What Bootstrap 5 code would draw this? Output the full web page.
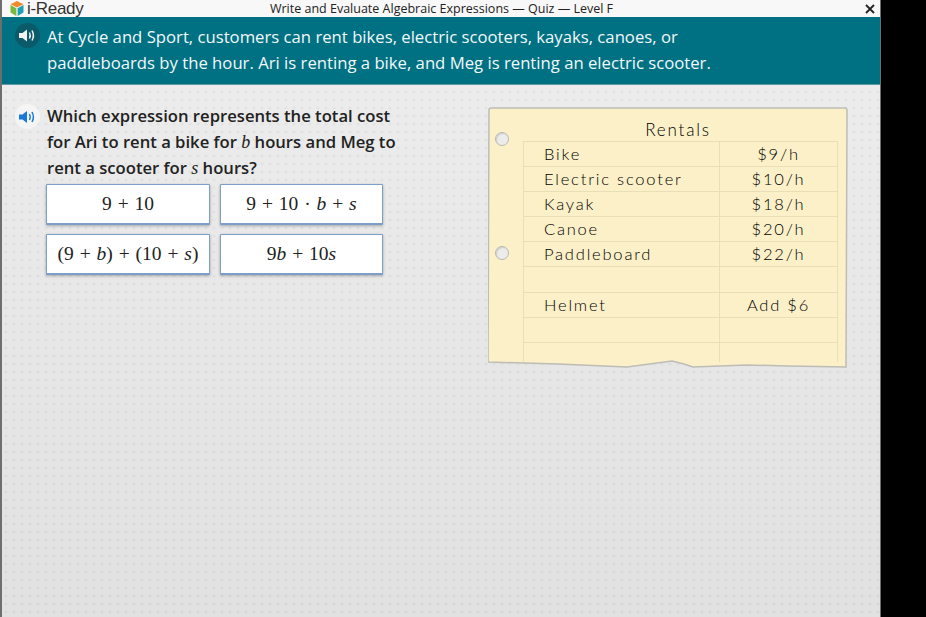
<!DOCTYPE html>
<html lang="en"><head><meta charset="utf-8"><title>i-Ready Quiz</title>
<link href="https://cdn.jsdelivr.net/npm/bootstrap@5.3.0/dist/css/bootstrap.min.css" rel="stylesheet">
<style>
html,body{height:617px;overflow:hidden;background:#000}
.stage{width:881px;height:617px;border-left:2px solid #6e6e6e;border-right:1px solid #6e6e6e;background-color:#e6e6e6;background-image:radial-gradient(circle,rgba(0,0,0,.035) 1.3px,transparent 1.8px),linear-gradient(#eeeeee,#e1e1e1);background-size:8px 8px,100% 100%;font-family:"Open Sans","Noto Sans",sans-serif}
.topbar{height:17px;background:#f8f8f8;padding:0 8px}
.brand{font:400 17px/17px "Liberation Sans",sans-serif;color:#333;letter-spacing:-.3px;width:254px;gap:3px}
.ttl{font:400 12.5px/15px "Open Sans",sans-serif;color:#222;width:347px;text-align:center;margin-left:4px;white-space:nowrap}
.closex{margin-left:auto;margin-right:-3px}
.banner{height:68px;background:#007083;border-bottom:1px solid #5f9aa5;color:#f2f8f9;font-size:16.7px;line-height:26px;padding:6px 10px 0 13px;gap:7px;font-weight:400;white-space:nowrap}
.banner-text{margin-top:1px}
.round{width:25px;height:25px;border-radius:50%;flex:none}
.dark{background:#0b5a69}
.pale{background:#f5f5f5;margin-top:1px}
.left-pane{width:369px;margin:18px 0 0 13px}
.q{font-size:16.65px;line-height:26px;font-weight:600;color:#222;gap:7px;white-space:nowrap}
.q p{margin:0}
.mvar{font-family:"Liberation Serif",serif;font-style:italic;font-weight:400;font-size:18px}
.choices{display:grid;grid-template-columns:164px 163px;gap:9px 10px;margin:3px 0 0 31px}
.choice{height:41px;background:#fff;border:1px solid #7d9ec8;border-bottom-width:2px;box-shadow:0 1px 3px rgba(0,0,0,.3);border-radius:1px;font:400 19.5px/38px "Liberation Serif",serif;word-spacing:1px;color:#222;padding:0;text-align:center;white-space:nowrap}
.choice i{font-style:italic}
.note-wrap{position:relative;width:360px;height:263px;margin:22px 0 0 104px}
.note-svg{position:absolute;inset:0}
.note{position:relative;height:100%;padding:12px 0 0 35px;color:#000;font-family:"Lato",sans-serif;font-size:16.5px;font-weight:300;letter-spacing:1.8px}
.note h2{font:inherit;margin:0;width:310px;text-align:center;line-height:22px;font-size:17px}
.sheet{width:315px;margin:0;border-collapse:collapse;table-layout:fixed}
.sheet td{height:25px;padding:0 0 0 20px;border:1px solid #e9dfb6;line-height:24px;white-space:nowrap}
.sheet td:last-child{text-align:center;padding:0;width:118px}
.sheet tr.tall td{height:26px}
.sheet tr.tail td{height:19px;line-height:1;border-bottom:0}
.punch{position:absolute;left:7px;width:14px;height:14px;border-radius:50%;background:#ececec;border:1px solid #b9b9b0;box-shadow:inset 1px 1px 1px rgba(0,0,0,.12)}
.p1{top:25px}.p2{top:139px}
</style></head><body>
<div class="stage">
  <div class="topbar d-flex align-items-center">
    <div class="brand d-flex align-items-center">
      <svg width="14" height="15" viewBox="0 0 14 15"><path d="M7 0 13.500 3.200 7 6.500.5 3.200z" fill="#f08a2c"/><path d="M.5 4 6.400 7.200V15L.5 11.600z" fill="#79b83f"/><path d="M13.500 4 7.600 7.200V15l5.900-3.400z" fill="#1f9fb5"/></svg>
      <span>i-Ready</span>
    </div>
    <div class="ttl">Write and Evaluate Algebraic Expressions — Quiz — Level F</div>
    <svg class="closex" width="10" height="10" viewBox="0 0 10 10"><path d="M1 1 9 9M9 1 1 9" stroke="#222" stroke-width="1.800"/></svg>
  </div>
  <div class="banner d-flex">
    <span class="round dark d-flex align-items-center justify-content-center">
      <svg width="17" height="13" viewBox="0 0 17 13"><path d="M0 4H3.500L8 .5V12.500L3.500 9H0z" fill="#f2f2f2"/><path d="M10.500 3.500Q12 6.500 10.500 9.500M13 1.500Q15.800 6.500 13 11.500" fill="none" stroke="#f2f2f2" stroke-width="1.500"/></svg>
    </span>
    <div class="banner-text">At Cycle and Sport, customers can rent bikes, electric scooters, kayaks, canoes, or<br>paddleboards by the hour. Ari is renting a bike, and Meg is renting an electric scooter.</div>
  </div>
  <div class="d-flex">
    <div class="left-pane">
      <div class="q d-flex">
        <span class="round pale d-flex align-items-center justify-content-center">
          <svg width="17" height="14" viewBox="0 0 17 13"><path d="M0 4H3.500L8 .5V12.500L3.500 9H0z" fill="#1a78d6"/><path d="M10.500 3.500Q12 6.500 10.500 9.500M13 1.500Q15.800 6.500 13 11.500" fill="none" stroke="#1a78d6" stroke-width="1.500"/></svg>
        </span>
        <p>Which expression represents the total cost<br>for Ari to rent a bike for <span class="mvar">b</span> hours and Meg to<br>rent a scooter for <span class="mvar">s</span> hours?</p>
      </div>
      <div class="choices">
        <button type="button" class="btn choice">9 + 10</button>
        <button type="button" class="btn choice">9 + 10 · <i>b</i> + <i>s</i></button>
        <button type="button" class="btn choice">(9 + <i>b</i>) + (10 + <i>s</i>)</button>
        <button type="button" class="btn choice">9<i>b</i> + 10<i>s</i></button>
      </div>
    </div>
    <div class="note-wrap">
      <svg class="note-svg" width="360" height="263" viewBox="0 0 360 263"><path d="M1 3Q1 1 3 1H357Q359 1 359 4L358 260 300 259 259 258 205 260 196 257 184 254 139 260 70 257 0 255z" fill="#fbf0c8" stroke="#bdbdb6" stroke-width="1.500"/></svg>
      <div class="note">
        <span class="punch p1"></span><span class="punch p2"></span>
        <h2>Rentals</h2>
        <table class="sheet">
          <tr><td>Bike</td><td>$9/h</td></tr>
          <tr><td>Electric scooter</td><td>$10/h</td></tr>
          <tr><td>Kayak</td><td>$18/h</td></tr>
          <tr><td>Canoe</td><td>$20/h</td></tr>
          <tr><td>Paddleboard</td><td>$22/h</td></tr>
          <tr class="tall"><td></td><td></td></tr>
          <tr><td>Helmet</td><td>Add $6</td></tr>
          <tr><td></td><td></td></tr>
          <tr class="tail"><td></td><td></td></tr>
        </table>
      </div>
    </div>
  </div>
</div>
<script src="https://cdn.jsdelivr.net/npm/bootstrap@5.3.0/dist/js/bootstrap.bundle.min.js"></script>
</body></html>
